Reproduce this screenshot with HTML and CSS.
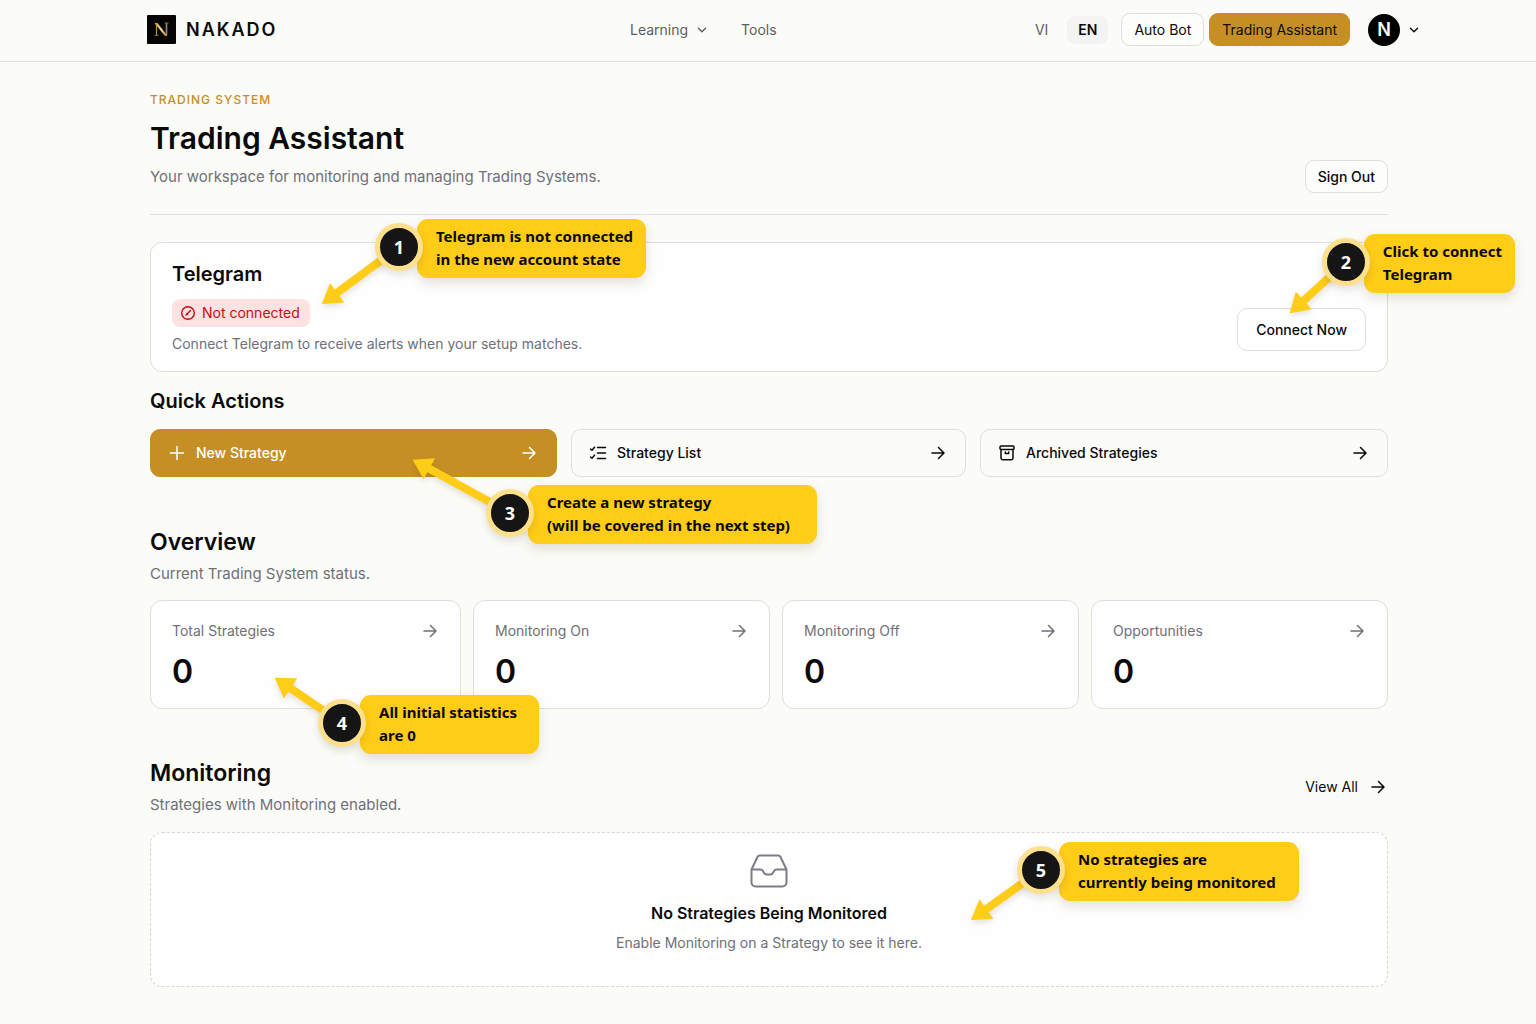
FILE: index.html
```html
<!DOCTYPE html>
<html lang="en">
<head>
<meta charset="utf-8">
<meta name="viewport" content="width=device-width, initial-scale=1">
<title>Nakado – Trading Assistant</title>
<link rel="stylesheet" href="styles.css">
</head>
<body>
<svg class="sprite" aria-hidden="true">
  <symbol id="arrow" viewBox="0 0 20 20"><path d="M4 10h12M10.500 4.500 16 10l-5.500 5.500"/></symbol>
  <symbol id="chevron" viewBox="0 0 20 20"><path d="m6 8 4 4 4-4"/></symbol>
</svg>

<header class="site-header">
  <div class="site-header-inner">
    <div class="brand-cell">
      <a class="brand" href="#">
        <svg class="brand-mark" viewBox="0 0 29 29" aria-hidden="true">
          <defs>
            <linearGradient id="gold" x1="0" y1="0" x2="1" y2="1">
              <stop offset="0" stop-color="#c99a3a"/>
              <stop offset="0.5" stop-color="#f2dc9a"/>
              <stop offset="1" stop-color="#b98528"/>
            </linearGradient>
          </defs>
          <rect width="29" height="29" rx="1" fill="#060504"/>
          <path d="M9.500 20.500V8.500" stroke="#b98f45" stroke-width="1.200" fill="none"/>
          <path d="M19.500 20V8" stroke="#8f8a80" stroke-width="1.600" fill="none"/>
          <path d="M7.500 8h3l10 13h-2.500z" fill="url(#gold)"/>
          <path d="M7.500 20.500h4M17.500 8h4" stroke="#a67a2c" stroke-width="0.800"/>
        </svg>
        <span>NAKADO</span>
      </a>
    </div>
    <nav class="main-nav" aria-label="Main">
      <button class="nav-item" type="button">Learning <svg class="icon chevron"><use href="#chevron"/></svg></button>
      <a class="nav-item" href="#">Tools</a>
    </nav>
    <div class="header-actions">
      <div class="lang">
        <button class="lang-item" type="button">VI</button>
        <button class="lang-item lang-current" type="button" aria-pressed="true">EN</button>
      </div>
      <div class="products">
        <a class="button" href="#">Auto Bot</a>
        <a class="button button-gold" href="#">Trading Assistant</a>
      </div>
      <button class="account" type="button" aria-label="Account menu">
        <span class="avatar">N</span>
        <svg class="icon chevron"><use href="#chevron"/></svg>
      </button>
    </div>
  </div>
</header>

<main class="page">
  <div class="page-head">
    <div class="page-intro">
      <p class="eyebrow">TRADING SYSTEM</p>
      <h1>Trading Assistant</h1>
      <p class="muted lede">Your workspace for monitoring and managing Trading Systems.</p>
    </div>
    <button class="button button-medium" type="button">Sign Out</button>
  </div>

  <section class="telegram anchor">
    <div>
      <h2 class="small-title">Telegram</h2>
      <p class="status">
        <svg class="status-icon" viewBox="0 0 16 16" aria-hidden="true"><circle cx="8" cy="8" r="6.300"/><path d="m6 10 4.500-4.500M6.800 8.600l.9.900"/></svg>
        Not connected
      </p>
      <p class="muted">Connect Telegram to receive alerts when your setup matches.</p>
    </div>
    <button class="button button-medium button-large" type="button">Connect Now</button>

    <aside class="callout callout-status">
      <svg class="pointer" viewBox="0 0 1 1" aria-hidden="true"><path transform="rotate(143.500)" d="M0-4H77V-12L96 0 77 12V4H0z"/></svg>
      <span class="step">1</span>
      <p>Telegram is not connected<br>in the new account state</p>
    </aside>
    <aside class="callout callout-connect">
      <svg class="pointer" viewBox="0 0 1 1" aria-hidden="true"><path transform="rotate(137.700)" d="M0-4H57V-12L76 0 57 12V4H0z"/></svg>
      <span class="step">2</span>
      <p>Click to connect<br>Telegram</p>
    </aside>
  </section>

  <section class="quick anchor">
    <h2 class="small-title">Quick Actions</h2>
    <div class="quick-grid">
      <a class="action action-gold" href="#">
        <svg class="icon" viewBox="0 0 20 20"><path d="M10 3.500v13M3.500 10h13"/></svg>
        <span>New Strategy</span>
        <svg class="icon"><use href="#arrow"/></svg>
      </a>
      <a class="action" href="#">
        <svg class="icon" viewBox="0 0 20 20"><path d="M9.500 4.500h8M9.500 10h8M9.500 15.500h8M2.500 6 4 7.200l2.500-3M2.500 14 4 15.200l2.500-3"/></svg>
        <span>Strategy List</span>
        <svg class="icon"><use href="#arrow"/></svg>
      </a>
      <a class="action" href="#">
        <svg class="icon" viewBox="0 0 20 20"><rect x="3" y="3" width="14" height="3.500" rx="1"/><path d="M4 6.500V15a1.800 1.800 0 0 0 1.800 1.800h8.400A1.800 1.800 0 0 0 16 15V6.500M8.300 9v1.500h3.400V9"/></svg>
        <span>Archived Strategies</span>
        <svg class="icon"><use href="#arrow"/></svg>
      </a>
    </div>
    <aside class="callout callout-create">
      <svg class="pointer" viewBox="0 0 1 1" aria-hidden="true"><path transform="rotate(-151.300)" d="M0-4H92V-12L111 0 92 12V4H0z"/></svg>
      <span class="step">3</span>
      <p>Create a new strategy<br>(will be covered in the next step)</p>
    </aside>
  </section>

  <section class="overview anchor">
    <h2>Overview</h2>
    <p class="muted lede">Current Trading System status.</p>
    <div class="stat-grid">
      <a class="stat" href="#">
        <span class="stat-head">Total Strategies <svg class="icon"><use href="#arrow"/></svg></span>
        <strong>0</strong>
      </a>
      <a class="stat" href="#">
        <span class="stat-head">Monitoring On <svg class="icon"><use href="#arrow"/></svg></span>
        <strong>0</strong>
      </a>
      <a class="stat" href="#">
        <span class="stat-head">Monitoring Off <svg class="icon"><use href="#arrow"/></svg></span>
        <strong>0</strong>
      </a>
      <a class="stat" href="#">
        <span class="stat-head">Opportunities <svg class="icon"><use href="#arrow"/></svg></span>
        <strong>0</strong>
      </a>
    </div>
    <aside class="callout callout-stats">
      <svg class="pointer" viewBox="0 0 1 1" aria-hidden="true"><path transform="rotate(-146.100)" d="M0-4H62V-12L81 0 62 12V4H0z"/></svg>
      <span class="step">4</span>
      <p>All initial statistics<br>are 0</p>
    </aside>
  </section>

  <section class="monitoring">
    <div class="section-head">
      <div>
        <h2>Monitoring</h2>
        <p class="muted lede">Strategies with Monitoring enabled.</p>
      </div>
      <a class="view-all" href="#">View All <svg class="icon"><use href="#arrow"/></svg></a>
    </div>
    <div class="empty anchor">
      <svg class="inbox" viewBox="0 0 38 34" aria-hidden="true"><path d="M1.500 15.500 7.500 3Q8.200 1.500 9.800 1.500h18.400q1.600 0 2.300 1.500l6 12.500v13a4 4 0 0 1-4 4h-27a4 4 0 0 1-4-4zh9.200q1.300 0 2 1.200l1.600 2.600q.7 1.200 2 1.200h4.400q1.300 0 2-1.200l1.600-2.600q.7-1.200 2-1.200h10.200"/></svg>
      <h3>No Strategies Being Monitored</h3>
      <p class="muted">Enable Monitoring on a Strategy to see it here.</p>
      <aside class="callout callout-empty">
        <svg class="pointer" viewBox="0 0 1 1" aria-hidden="true"><path transform="rotate(144.500)" d="M0-4H67V-12L86 0 67 12V4H0z"/></svg>
        <span class="step">5</span>
        <p>No strategies are<br>currently being monitored</p>
      </aside>
    </div>
  </section>
</main>
</body>
</html>
```
FILE: styles.css
```css
* { box-sizing: border-box; }

:root {
  --bg: #fbfbf8;
  --ink: #0a0a0a;
  --muted: #6f7078;
  --line: #dededc;
  --gold: #c68f25;
  --note: #ffcc18;
}

body {
  margin: 0;
  background: var(--bg);
  color: var(--ink);
  font: 400 14px/24px Inter, "Liberation Sans", sans-serif;
}

h1, h2, h3, p { margin: 0; }
a { color: inherit; text-decoration: none; }
button { font: inherit; color: inherit; cursor: pointer; }

.sprite { display: none; }

.icon {
  flex: none;
  width: 20px;
  height: 20px;
  fill: none;
  stroke: currentColor;
  stroke-width: 1.5;
  stroke-linecap: round;
  stroke-linejoin: round;
}

.icon.chevron { width: 18px; height: 18px; }

.muted { color: var(--muted); }
.lede { font-size: 15px; }
.anchor { position: relative; }

/* Header */
.site-header {
  border-bottom: 1px solid var(--line);
  padding: 13px 0 15px 34px;
}

.site-header-inner {
  display: flex;
  align-items: center;
  max-width: 1276px;
  margin: 0 auto;
}

.brand-cell { display: flex; flex: 0 0 483px; }

.brand {
  display: flex;
  align-items: center;
  gap: 10px;
  font-size: 18px;
  font-weight: 600;
  letter-spacing: 2px;
}

.brand-mark { width: 29px; height: 29px; }

.main-nav {
  display: flex;
  gap: 30px;
  color: #5d5d63;
}

.nav-item {
  display: flex;
  align-items: center;
  gap: 5px;
  padding: 0;
  border: 0;
  background: none;
}

.header-actions {
  display: flex;
  align-items: center;
  margin-left: auto;
}

.lang { display: flex; gap: 8px; margin-right: 13px; }

.lang-item {
  padding: 2px 11px;
  border: 0;
  border-radius: 8px;
  background: none;
  color: #5d5d63;
}

.lang-current {
  background: #f4f3f1;
  color: var(--ink);
  font-weight: 600;
}

.products { display: flex; gap: 5px; margin-right: 18px; }

.button {
  display: inline-block;
  padding: 4px 12px;
  border: 1px solid var(--line);
  border-radius: 9px;
  background: #fdfdfc;
  line-height: 23px;
  white-space: nowrap;
}

.button-gold { border-color: var(--gold); background: var(--gold); }

.button-medium { font-weight: 500; }

.button-large { padding: 9px 18px; border-radius: 10px; background: #fff; }

.account {
  display: flex;
  align-items: center;
  gap: 5px;
  padding: 0;
  border: 0;
  background: none;
}

.avatar {
  width: 32px;
  border-radius: 50%;
  background: #000;
  color: #fff;
  font-size: 18px;
  font-weight: 600;
  line-height: 32px;
  text-align: center;
}

/* Page */
.page {
  max-width: 1288px;
  margin: 0 auto;
  padding: 30px 24px 37px 26px;
}

.page-head {
  display: flex;
  align-items: flex-end;
  justify-content: space-between;
  padding-bottom: 21px;
  border-bottom: 1px solid var(--line);
}

.page-intro { padding-bottom: 4px; }

.eyebrow {
  color: var(--gold);
  font-size: 12px;
  font-weight: 500;
  line-height: 16px;
  letter-spacing: 1px;
}

h1 {
  margin: 10px 0 7px;
  font-size: 30px;
  font-weight: 600;
  line-height: 40px;
}

h2 {
  font-size: 23px;
  font-weight: 600;
  line-height: 32px;
}

h2 + .muted { margin-top: 4px; }

.telegram {
  display: flex;
  align-items: flex-end;
  justify-content: space-between;
  margin-top: 27px;
  padding: 17px 21px 15px;
  border: 1px solid var(--line);
  border-radius: 12px;
  background: #fefefe;
}

.small-title { font-size: 20px; line-height: 28px; }

.telegram .button { margin-bottom: 5px; }

.status {
  display: flex;
  align-items: center;
  gap: 6px;
  width: fit-content;
  margin: 11px 0 5px;
  padding: 2px 10px 2px 8px;
  border-radius: 8px;
  background: #fee1e1;
  color: #c80d10;
}

.status-icon {
  width: 16px;
  height: 16px;
  fill: none;
  stroke: currentColor;
  stroke-width: 1.4;
  stroke-linecap: round;
}

.quick { margin-top: 15px; }

.quick-grid {
  display: grid;
  grid-template-columns: 407fr 395fr 408fr;
  gap: 14px;
  margin-top: 14px;
}

.action {
  display: flex;
  align-items: center;
  gap: 9px;
  padding: 11px 17px 11px 16px;
  border: 1px solid var(--line);
  border-radius: 10px;
  font-weight: 500;
}

.action span { flex: 1; }

.action-gold {
  border-color: var(--gold);
  background: var(--gold);
  color: #fff;
}

.overview { margin-top: 49px; }

.stat-grid {
  display: grid;
  grid-template-columns: 311fr 297fr 297fr 297fr;
  gap: 12px;
  margin-top: 14px;
}

.stat {
  padding: 18px 20px 16px 21px;
  border: 1px solid var(--line);
  border-radius: 12px;
  background: #fefefe;
}

.stat-head {
  display: flex;
  align-items: center;
  justify-content: space-between;
  color: var(--muted);
}

.stat strong {
  display: block;
  margin-top: 9px;
  font-size: 32px;
  font-weight: 600;
  line-height: 40px;
}

.monitoring { margin-top: 48px; }

.section-head {
  display: flex;
  align-items: center;
  justify-content: space-between;
}

.view-all { display: flex; align-items: center; gap: 10px; }

.empty {
  display: flex;
  flex-direction: column;
  align-items: center;
  margin-top: 15px;
  padding: 21px 20px 31px;
  border: 1px dashed #d6d6d2;
  border-radius: 12px;
  background: #fefefe;
}

.inbox {
  width: 38px;
  height: 34px;
  fill: none;
  stroke: #7b7c87;
  stroke-width: 2;
  stroke-linejoin: round;
}

.empty h3 {
  margin: 13px 0 6px;
  font-size: 16px;
  font-weight: 600;
  line-height: 24px;
}

/* Walkthrough notes laid over the page */
.callout {
  position: absolute;
  z-index: 1;
  padding: 6px 13px 7px 19px;
  border-radius: 11px;
  background: var(--note);
  box-shadow: 0 5px 12px rgba(90, 70, 10, 0.16);
  font: 700 15px/23px "Noto Sans", "Open Sans", sans-serif;
  white-space: nowrap;
}

.step {
  position: absolute;
  top: 4px;
  left: -42px;
  width: 48px;
  height: 48px;
  border: 5px solid #fddf8c;
  border-radius: 50%;
  background: #151515;
  color: #fff;
  font-size: 18px;
  line-height: 38px;
  text-align: center;
  box-shadow: 0 4px 8px rgba(60, 50, 20, 0.14);
}

.pointer {
  position: absolute;
  top: 28px;
  left: -18px;
  width: 1px;
  height: 1px;
  overflow: visible;
  fill: var(--note);
  filter: drop-shadow(0 3px 3px rgba(90, 70, 10, 0.16));
}

.callout-status { top: -24px; left: 266px; }
.callout-connect { top: -9px; right: -128px; }
.callout-create { top: 98px; left: 378px; min-width: 289px; }
.callout-stats { top: 169px; left: 210px; min-width: 179px; }
.callout-empty { top: 9px; right: 88px; min-width: 240px; }
```
